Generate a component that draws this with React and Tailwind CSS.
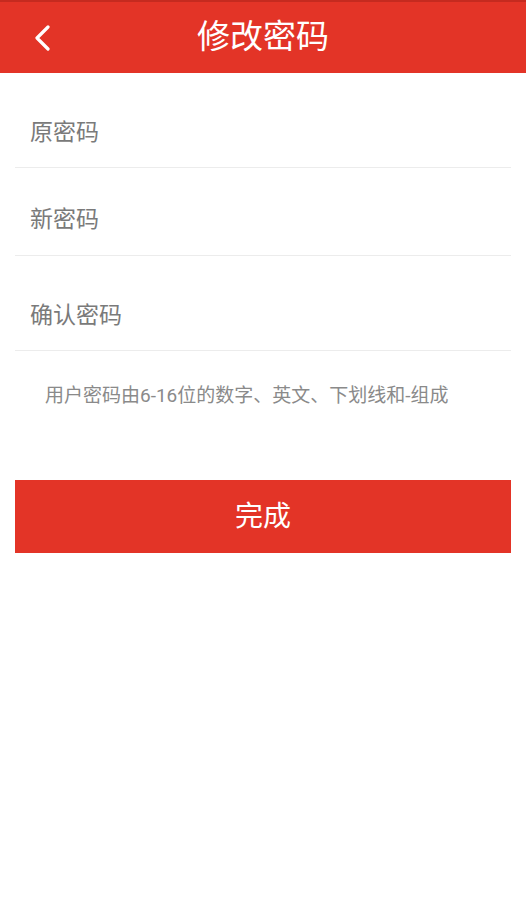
import { useState } from "react";

const font = { fontFamily: '"Roboto", "Noto Sans CJK SC", sans-serif' };

function Field({ placeholder, className }) {
  const [value, setValue] = useState("");
  return (
    <div className={`mx-[15px] border-b border-[#ececec] flex ${className}`}>
      <input
        type="password"
        value={value}
        onChange={(e) => setValue(e.target.value)}
        placeholder={placeholder}
        className="w-full px-[15px] text-[23px] text-[#777] placeholder:text-[#7a7a7a] outline-none bg-transparent"
      />
    </div>
  );
}

export default function App() {
  return (
    <div className="min-h-screen bg-white" style={font}>
      {/* Top bar */}
      <div className="h-[73px] bg-[#e33427] border-t-2 border-[#c52a1f] flex items-center relative">
        <button className="absolute left-[33px] top-[23px] w-[18px] h-[26px] flex items-center">
          <svg width="18" height="26" viewBox="0 0 18 26" fill="none">
            <path
              d="M15 2 L4 13 L15 24"
              stroke="white"
              strokeWidth="3.2"
              strokeLinecap="round"
              strokeLinejoin="round"
            />
          </svg>
        </button>
        <h1 className="w-full text-center text-white text-[33px] leading-none -mt-[3px]">
          修改密码
        </h1>
      </div>

      {/* Form */}
      <Field placeholder="原密码" className="h-[95px] pt-[27px]" />
      <Field placeholder="新密码" className="h-[88px] pt-[18px]" />
      <Field placeholder="确认密码" className="h-[95px] pt-[27px]" />

      <p className="px-[45px] pt-[35px] text-[19px] leading-none text-[#8a8a8a] whitespace-nowrap">
        用户密码由6-16位的数字、英文、下划线和-组成
      </p>

      <div className="px-[15px] pt-[75px]">
        <button className="w-full h-[73px] bg-[#e33427] text-white text-[28px] flex items-center justify-center">
          完成
        </button>
      </div>
    </div>
  );
}
